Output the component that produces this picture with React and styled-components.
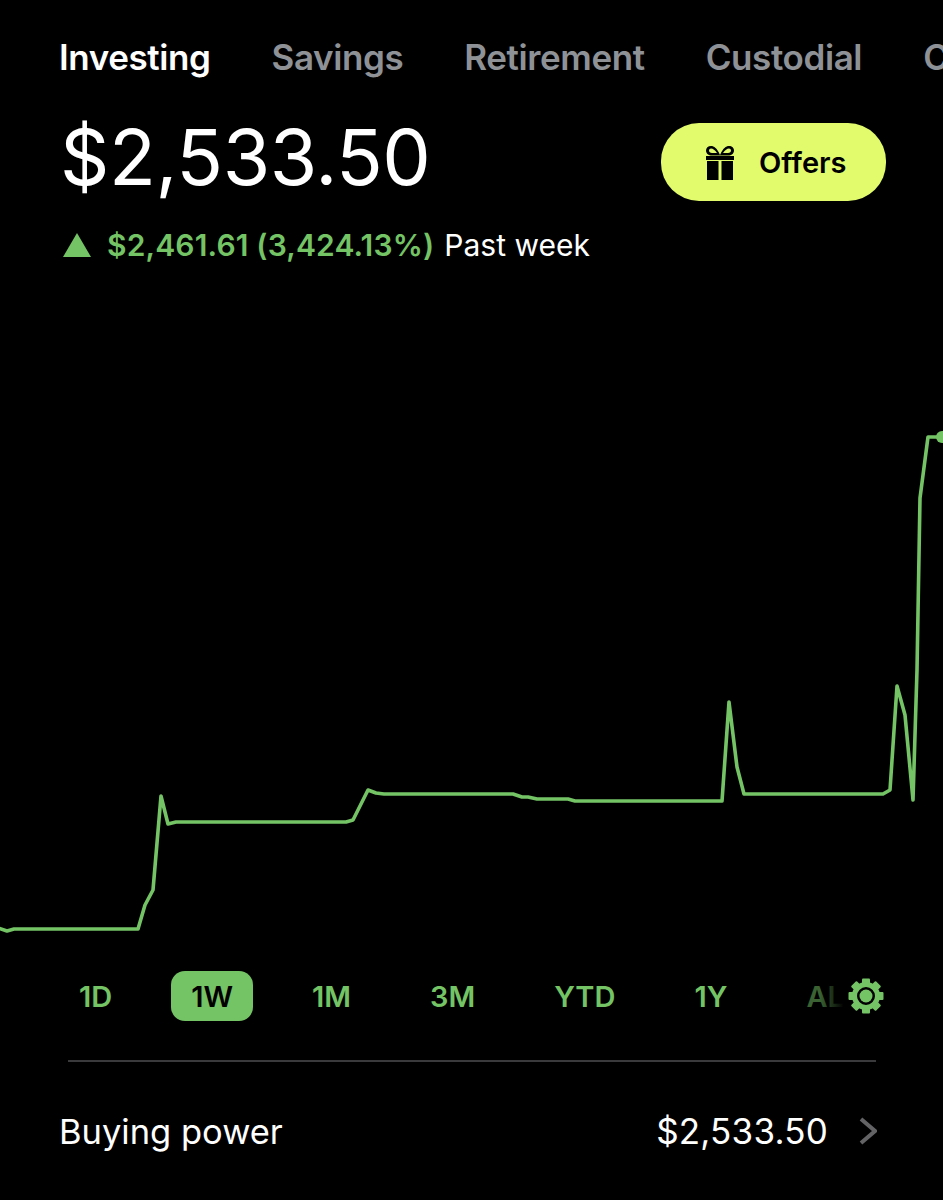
import React from "react";
import styled, { createGlobalStyle } from "styled-components";

const GREEN = "#74c365";

const TABS = ["Investing", "Savings", "Retirement", "Custodial", "Crypto"];
const RANGES = ["1D", "1W", "1M", "3M", "YTD", "1Y", "ALL"];

// chart points in page pixels
const POINTS = [
  [-2, 928], [7, 931], [14, 929], [138, 929], [145, 905], [153, 890], [161, 796], [168, 824],
  [176, 822], [346, 822], [353, 820], [368, 790], [376, 793], [384, 794], [513, 794], [522, 797],
  [528, 797], [537, 799], [568, 799], [575, 801], [722, 801], [729, 702], [737, 767], [744, 794],
  [883, 794], [890, 790], [897, 686], [905, 715], [913, 800], [917, 670], [920, 498], [928, 437],
  [941, 437],
];

const App = () => (
  <Page>
    <GlobalStyle />
    <Tabs>
      {TABS.map((tab, i) => (
        <Tab key={tab} $active={i === 0}>
          {tab}
        </Tab>
      ))}
    </Tabs>

    <Header>
      <Price>$2,533.50</Price>
      <OffersButton>
        <svg width="30" height="35" viewBox="0 0 30 35" fill="#000">
          <path
            d="M15 10C12 3 9 1 6 1 3 1 1 3 1 5.500 1 8.500 3.500 10.500 7 10.500H23C26.500 10.500 29 8.500 29 5.500 29 3 27 1 24 1 21 1 18 3 15 10ZM12 8H7C5 8 4 7 4 5.500 4 4.300 5 3.500 6 3.500 8 3.500 10 5 12 8ZM18 8H23C25 8 26 7 26 5.500 26 4.300 25 3.500 24 3.500 22 3.500 20 5 18 8Z"
            fillRule="evenodd"
          />
          <rect x="1" y="11" width="28" height="4" />
          <rect x="2" y="16" width="11.500" height="19" />
          <rect x="16.500" y="16" width="11.500" height="19" />
        </svg>
        Offers
      </OffersButton>
    </Header>

    <Change>
      <Triangle />
      <Gain>$2,461.61 (3,424.13%)</Gain>
      <span>Past week</span>
    </Change>

    <Chart viewBox="0 290 943 660">
      <polyline
        points={POINTS.map((p) => p.join(",")).join(" ")}
        fill="none"
        stroke={GREEN}
        strokeWidth="3.6"
        strokeLinejoin="round"
      />
      <circle cx="942" cy="437" r="6" fill={GREEN} />
    </Chart>

    <Ranges>
      {RANGES.map((range) => (
        <Range key={range} $active={range === "1W"} $faded={range === "ALL"}>
          {range}
        </Range>
      ))}
      <Gear>
        <svg width="36" height="36" viewBox="0 0 36 36">
          {[0, 45, 90, 135, 180, 225, 270, 315].map((deg) => (
            <rect key={deg} x="14" y="0.500" width="8" height="8" rx="1" fill={GREEN} transform={`rotate(${deg} 18 18)`} />
          ))}
          <circle cx="18" cy="18" r="11.500" fill="none" stroke={GREEN} strokeWidth="5" />
          <circle cx="18" cy="18" r="6.500" fill={GREEN} />
        </svg>
      </Gear>
    </Ranges>

    <Divider />

    <Row>
      <span>Buying power</span>
      <RowValue>
        $2,533.50
        <svg width="18" height="28" viewBox="0 0 18 28" fill="none" stroke="#636366" strokeWidth="4">
          <path d="M2 2L16 14 2 26" />
        </svg>
      </RowValue>
    </Row>
  </Page>
);

const GlobalStyle = createGlobalStyle`
  html, body {
    margin: 0;
    background: #000;
  }
`;

const Page = styled.div`
  width: 943px;
  height: 1200px;
  overflow: hidden;
  background: #000;
  color: #fff;
  font-family: Inter, "Liberation Sans", sans-serif;
`;

const Tabs = styled.div`
  display: flex;
  gap: 61px;
  padding: 37px 0 0 59px;
  height: 40px;
  white-space: nowrap;
`;

const Tab = styled.div`
  font-size: 35px;
  line-height: 40px;
  font-weight: 600;
  letter-spacing: -0.4px;
  color: ${(props) => (props.$active ? "#fff" : "#8e9297")};
`;

const Header = styled.div`
  display: flex;
  justify-content: space-between;
  align-items: center;
  height: 88px;
  margin-top: 40px;
  padding: 0 57px 0 60px;
`;

const Price = styled.div`
  font-size: 77px;
  line-height: 80px;
  font-weight: 400;
  letter-spacing: -0.4px;
  margin-top: -8px;
`;

const OffersButton = styled.div`
  display: flex;
  align-items: center;
  gap: 24px;
  box-sizing: border-box;
  width: 225px;
  height: 78px;
  padding-left: 44px;
  margin-top: 2px;
  border-radius: 38px;
  background: #e1fb6c;
  color: #000;
  font-size: 29px;
  font-weight: 600;
`;

const Change = styled.div`
  display: flex;
  align-items: center;
  height: 34px;
  margin-top: 23px;
  padding-left: 63px;
  font-size: 30px;
`;

const Triangle = styled.div`
  width: 0;
  height: 0;
  margin-right: 16px;
  border-left: 14.5px solid transparent;
  border-right: 14.5px solid transparent;
  border-bottom: 24px solid ${GREEN};
`;

const Gain = styled.span`
  margin-right: 10px;
  color: ${GREEN};
  font-weight: 600;
  letter-spacing: 0.15px;
`;

const Chart = styled.svg`
  display: block;
  width: 943px;
  height: 660px;
  margin-top: 28px;
`;

const Ranges = styled.div`
  position: relative;
  display: flex;
  align-items: center;
  gap: 39px;
  height: 50px;
  margin-top: 21px;
  padding-left: 59px;
  white-space: nowrap;
`;

const Range = styled.div`
  height: 50px;
  padding: 0 20px;
  border-radius: 14px;
  font-size: 29px;
  line-height: 51px;
  font-weight: 600;
  background: ${(props) => (props.$active ? GREEN : "transparent")};
  color: ${(props) => (props.$active ? "#000" : GREEN)};
  opacity: ${(props) => (props.$faded ? 0.5 : 1)};
`;

const Gear = styled.div`
  position: absolute;
  top: 7px;
  left: 820px;
  display: flex;
  padding-left: 28px;
  background: linear-gradient(to right, transparent, #000 24px);
`;

const Divider = styled.div`
  height: 2px;
  margin: 39px 67px 0 68px;
  background: #3a3a3c;
`;

const Row = styled.div`
  display: flex;
  justify-content: space-between;
  align-items: center;
  height: 44px;
  margin-top: 47px;
  padding: 0 66px 0 59px;
  font-size: 34.5px;
  font-weight: 400;
`;

const RowValue = styled.div`
  display: flex;
  align-items: center;
  gap: 31px;
  font-size: 35px;
  letter-spacing: 0.2px;
`;

export default App;
